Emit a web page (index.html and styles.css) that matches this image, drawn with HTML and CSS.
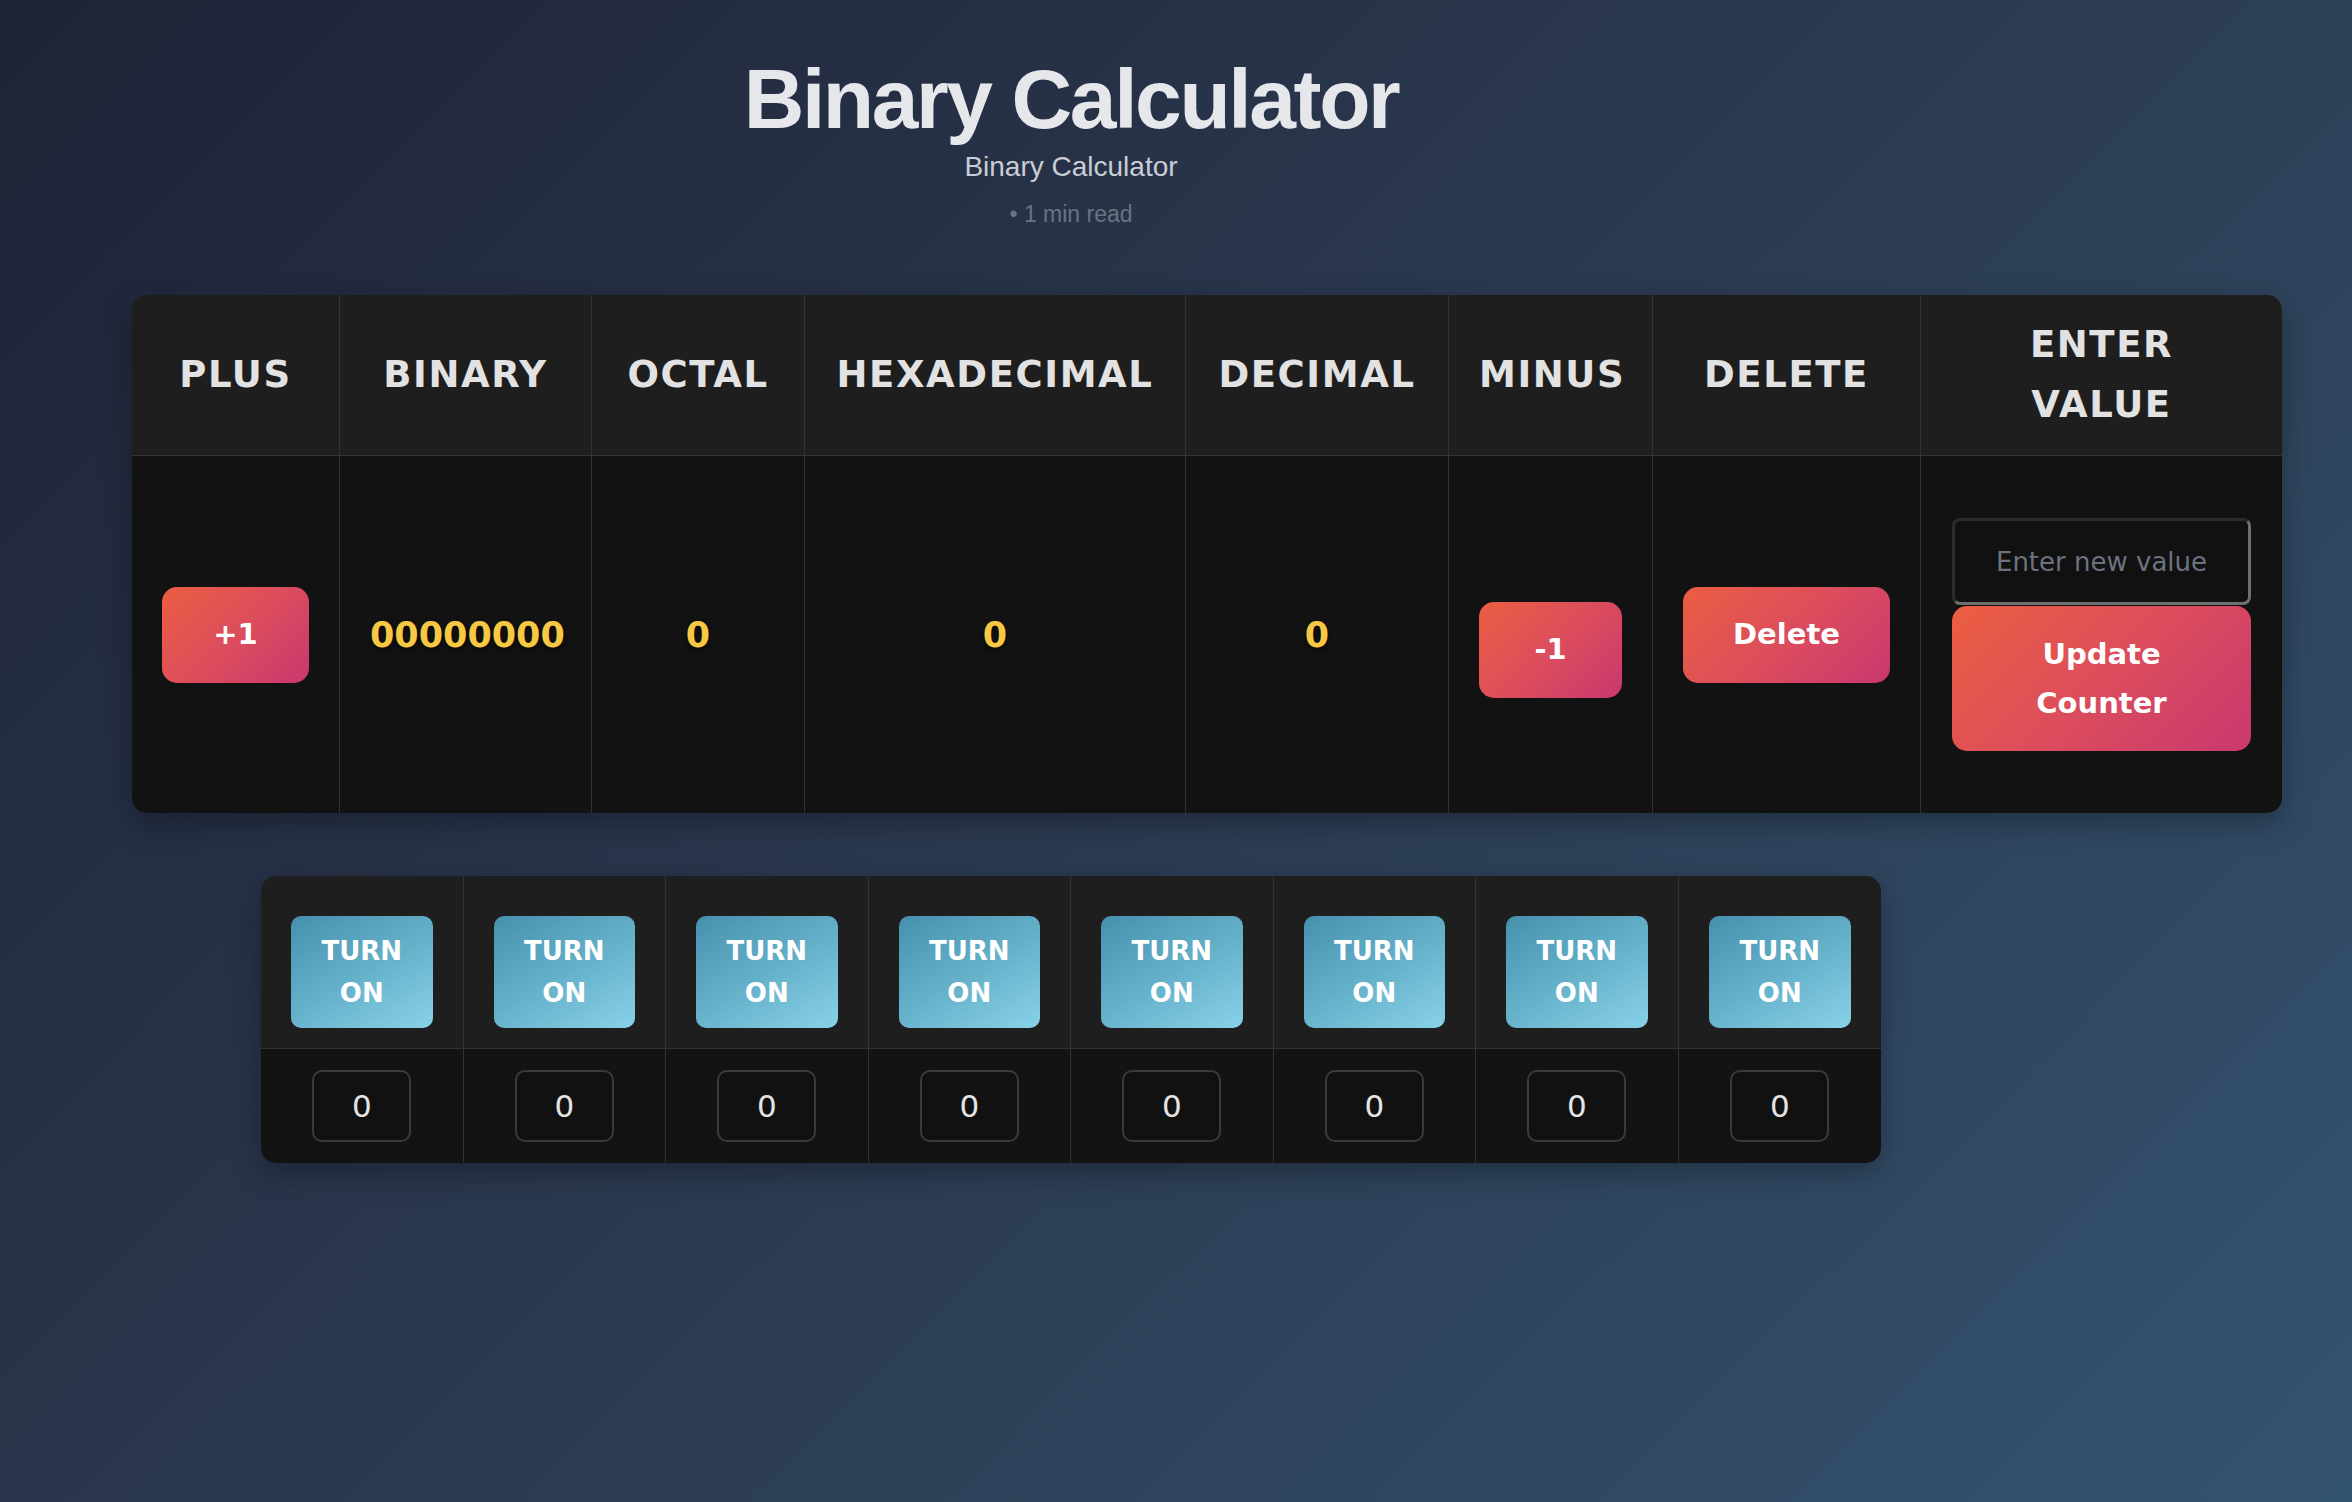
FILE: index.html
```html
<!DOCTYPE html>
<html lang="en">
<head>
<meta charset="utf-8">
<title>Binary Calculator</title>
<link rel="stylesheet" href="styles.css">
</head>
<body>
<div class="page">
  <header class="intro">
    <h1 class="title">Binary Calculator</h1>
    <p class="subtitle">Binary Calculator</p>
    <p class="meta">• 1 min read</p>
  </header>

  <table class="calc">
    <colgroup>
      <col class="c-plus"><col class="c-bin"><col class="c-oct"><col class="c-hex">
      <col class="c-dec"><col class="c-minus"><col class="c-del"><col class="c-enter">
    </colgroup>
    <thead>
      <tr>
        <th>Plus</th>
        <th>Binary</th>
        <th>Octal</th>
        <th>Hexadecimal</th>
        <th>Decimal</th>
        <th>Minus</th>
        <th>Delete</th>
        <th>Enter<br>Value</th>
      </tr>
    </thead>
    <tbody>
      <tr>
        <td><button class="btn-red">+1</button></td>
        <td><span class="num">00000000</span></td>
        <td><span class="num">0</span></td>
        <td><span class="num">0</span></td>
        <td><span class="num">0</span></td>
        <td><button class="btn-red btn-minus">-1</button></td>
        <td><button class="btn-red">Delete</button></td>
        <td class="enter-cell">
          <input class="value-input" type="text" placeholder="Enter new value">
          <button class="btn-red">Update Counter</button>
        </td>
      </tr>
    </tbody>
  </table>

  <table class="bits">
    <thead>
      <tr>
        <th><button class="btn-blue">Turn On</button></th>
        <th><button class="btn-blue">Turn On</button></th>
        <th><button class="btn-blue">Turn On</button></th>
        <th><button class="btn-blue">Turn On</button></th>
        <th><button class="btn-blue">Turn On</button></th>
        <th><button class="btn-blue">Turn On</button></th>
        <th><button class="btn-blue">Turn On</button></th>
        <th><button class="btn-blue">Turn On</button></th>
      </tr>
    </thead>
    <tbody>
      <tr>
        <td><span class="bit">0</span></td>
        <td><span class="bit">0</span></td>
        <td><span class="bit">0</span></td>
        <td><span class="bit">0</span></td>
        <td><span class="bit">0</span></td>
        <td><span class="bit">0</span></td>
        <td><span class="bit">0</span></td>
        <td><span class="bit">0</span></td>
      </tr>
    </tbody>
  </table>
</div>
</body>
</html>
```

FILE: styles.css
```css
html, body {
  margin: 0;
  min-height: 100%;
}

body {
  min-height: 1502px;
  background: linear-gradient(135deg, #1f2336 0%, #2b3a51 50%, #34536f 100%);
  font-family: "DejaVu Sans", sans-serif;
  color: #e0e0e0;
}

.page {
  width: 1878px;
  margin-left: 132px;
  padding-top: 49px;
}

.intro {
  text-align: center;
  font-family: "Liberation Sans", Arial, sans-serif;
}

.title {
  margin: 0;
  font-size: 84px;
  line-height: 100px;
  font-weight: 700;
  letter-spacing: -2.4px;
  color: #e5e7eb;
}

.subtitle {
  margin: 0;
  font-size: 28px;
  line-height: 36px;
  color: #c9cdd4;
}

.meta {
  margin: 14px 0 0;
  font-size: 23px;
  line-height: 30px;
  color: #6b7280;
}

/* main calculator table */
.calc {
  margin-top: 66px;
  width: 2150px;
  table-layout: fixed;
  border-collapse: separate;
  border-spacing: 0;
  border-radius: 15px;
  overflow: hidden;
  box-shadow: 0 10px 30px rgba(0, 0, 0, 0.3);
}

.c-plus { width: 208px; }
.c-bin { width: 252px; }
.c-oct { width: 213px; }
.c-hex { width: 381px; }
.c-dec { width: 263px; }
.c-minus { width: 204px; }
.c-del { width: 268px; }
.c-enter { width: 361px; }

.calc th {
  background: #1e1e1e;
  padding: 20px 30px;
  font-size: 37px;
  line-height: 60px;
  font-weight: 700;
  letter-spacing: 1.6px;
  text-transform: uppercase;
  color: #e2e2e2;
  text-align: center;
  border-right: 1px solid #333;
  border-bottom: 1px solid #333;
}

.calc td {
  background: #121212;
  padding: 0 30px;
  height: 355px;
  box-sizing: border-box;
  text-align: center;
  vertical-align: middle;
  border-right: 1px solid #333;
}

.calc th:last-child,
.calc td:last-child {
  border-right: none;
}

.calc td.enter-cell {
  padding: 62px 31px;
}

.num {
  font-size: 35px;
  font-weight: 700;
  color: #f7c843;
  text-shadow: 0 2px 4px rgba(0, 0, 0, 0.6);
}

.btn-red {
  display: block;
  width: 100%;
  border: none;
  border-radius: 15px;
  padding: 23.5px 30px;
  background: linear-gradient(135deg, #eb5e41 0%, #dc4d5c 50%, #c9386f 100%);
  color: #fff;
  font-family: "DejaVu Sans", sans-serif;
  font-size: 29px;
  line-height: 49px;
  font-weight: 700;
  cursor: pointer;
}

.btn-minus {
  margin-top: 30px;
}

.value-input {
  display: block;
  width: 100%;
  height: 87px;
  box-sizing: border-box;
  margin: 0 0 1px;
  padding: 0 12px;
  background: #111;
  border: 3px solid;
  border-color: #2c2c2c #6f6f6f #6f6f6f #2c2c2c;
  border-radius: 8px;
  font-family: "DejaVu Sans", sans-serif;
  font-size: 26px;
  color: #e0e0e0;
  text-align: center;
  outline: none;
}

.value-input::placeholder {
  color: #6b7280;
}

/* bit toggles */
.bits {
  margin: 63px auto 0;
  width: 1620px;
  table-layout: fixed;
  border-collapse: separate;
  border-spacing: 0;
  border-radius: 15px;
  overflow: hidden;
  box-shadow: 0 10px 30px rgba(0, 0, 0, 0.3);
}

.bits th {
  background: #1e1e1e;
  padding: 40px 30px 20px;
  border-right: 1px solid #333;
  border-bottom: 1px solid #333;
}

.bits td {
  background: #131313;
  padding: 21px 30px;
  text-align: center;
  border-right: 1px solid #333;
}

.bits th:last-child,
.bits td:last-child {
  border-right: none;
}

.btn-blue {
  display: block;
  width: 100%;
  border: none;
  border-radius: 10px;
  padding: 14px 12px;
  background: linear-gradient(150deg, #4690ad 0%, #64b0c9 50%, #88d2e8 100%);
  color: #fff;
  font-family: "DejaVu Sans", sans-serif;
  font-size: 26px;
  line-height: 42px;
  font-weight: 700;
  text-transform: uppercase;
  cursor: pointer;
}

.bit {
  display: inline-flex;
  align-items: center;
  justify-content: center;
  width: 99px;
  height: 72px;
  box-sizing: border-box;
  border: 2px solid #3a3a3a;
  border-radius: 10px;
  background: #111;
  font-size: 31px;
  color: #e4e4e4;
}
```
